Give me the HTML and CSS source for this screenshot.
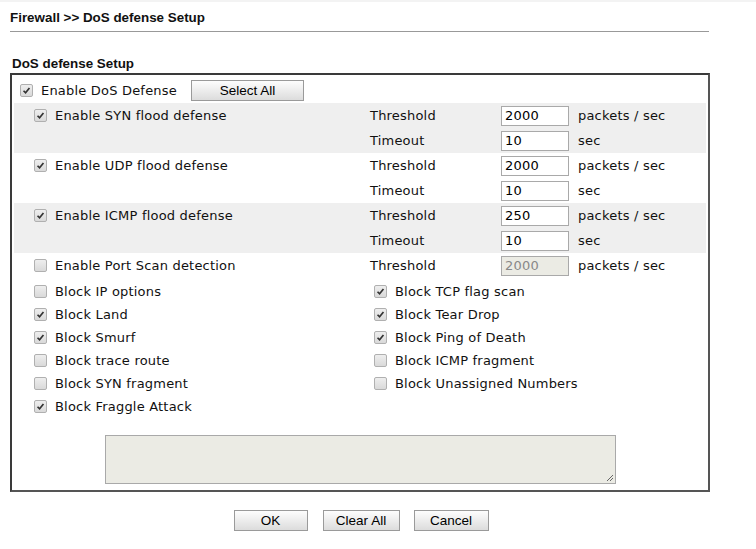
FILE: index.html
```html
<!DOCTYPE html>
<html>
<head>
<meta charset="utf-8">
<link rel="stylesheet" href="styles.css">
</head>
<body>
<div class="topband"></div>
<div class="page">
  <div class="crumb">Firewall &gt;&gt; DoS defense Setup</div>
  <div class="sectitle">DoS defense Setup</div>
  <div class="box">
    <div class="row-main">
      <span class="cb on"><svg viewBox="0 0 13 13"><path d="M3 6.8 L5.4 9.2 L10 3.6" /></svg></span>
      <span class="lbl">Enable DoS Defense</span>
      <button class="btn selall">Select All</button>
    </div>

    <div class="group gray">
      <div class="sub">
        <div class="c1"><span class="cb on"><svg viewBox="0 0 13 13"><path d="M3 6.8 L5.4 9.2 L10 3.6" /></svg></span><span class="lbl">Enable SYN flood defense</span></div>
        <div class="c2">Threshold</div>
        <div class="c3"><span class="inp">2000</span></div>
        <div class="c4">packets / sec</div>
      </div>
      <div class="sub">
        <div class="c1"></div>
        <div class="c2">Timeout</div>
        <div class="c3"><span class="inp">10</span></div>
        <div class="c4">sec</div>
      </div>
    </div>

    <div class="group">
      <div class="sub">
        <div class="c1"><span class="cb on"><svg viewBox="0 0 13 13"><path d="M3 6.8 L5.4 9.2 L10 3.6" /></svg></span><span class="lbl">Enable UDP flood defense</span></div>
        <div class="c2">Threshold</div>
        <div class="c3"><span class="inp">2000</span></div>
        <div class="c4">packets / sec</div>
      </div>
      <div class="sub">
        <div class="c1"></div>
        <div class="c2">Timeout</div>
        <div class="c3"><span class="inp">10</span></div>
        <div class="c4">sec</div>
      </div>
    </div>

    <div class="group gray">
      <div class="sub">
        <div class="c1"><span class="cb on"><svg viewBox="0 0 13 13"><path d="M3 6.8 L5.4 9.2 L10 3.6" /></svg></span><span class="lbl">Enable ICMP flood defense</span></div>
        <div class="c2">Threshold</div>
        <div class="c3"><span class="inp">250</span></div>
        <div class="c4">packets / sec</div>
      </div>
      <div class="sub">
        <div class="c1"></div>
        <div class="c2">Timeout</div>
        <div class="c3"><span class="inp">10</span></div>
        <div class="c4">sec</div>
      </div>
    </div>

    <div class="group single">
      <div class="sub">
        <div class="c1"><span class="cb"></span><span class="lbl">Enable Port Scan detection</span></div>
        <div class="c2">Threshold</div>
        <div class="c3"><span class="inp dis">2000</span></div>
        <div class="c4">packets / sec</div>
      </div>
    </div>

    <div class="blocks">
      <div class="bl"><span class="cb"></span><span class="lbl">Block IP options</span></div>
      <div class="br"><span class="cb on"><svg viewBox="0 0 13 13"><path d="M3 6.8 L5.4 9.2 L10 3.6" /></svg></span><span class="lbl">Block TCP flag scan</span></div>
      <div class="bl"><span class="cb on"><svg viewBox="0 0 13 13"><path d="M3 6.8 L5.4 9.2 L10 3.6" /></svg></span><span class="lbl">Block Land</span></div>
      <div class="br"><span class="cb on"><svg viewBox="0 0 13 13"><path d="M3 6.8 L5.4 9.2 L10 3.6" /></svg></span><span class="lbl">Block Tear Drop</span></div>
      <div class="bl"><span class="cb on"><svg viewBox="0 0 13 13"><path d="M3 6.8 L5.4 9.2 L10 3.6" /></svg></span><span class="lbl">Block Smurf</span></div>
      <div class="br"><span class="cb on"><svg viewBox="0 0 13 13"><path d="M3 6.8 L5.4 9.2 L10 3.6" /></svg></span><span class="lbl">Block Ping of Death</span></div>
      <div class="bl"><span class="cb"></span><span class="lbl">Block trace route</span></div>
      <div class="br"><span class="cb"></span><span class="lbl">Block ICMP fragment</span></div>
      <div class="bl"><span class="cb"></span><span class="lbl">Block SYN fragment</span></div>
      <div class="br"><span class="cb"></span><span class="lbl">Block Unassigned Numbers</span></div>
      <div class="bl"><span class="cb on"><svg viewBox="0 0 13 13"><path d="M3 6.8 L5.4 9.2 L10 3.6" /></svg></span><span class="lbl">Block Fraggle Attack</span></div>
      <div class="br"></div>
    </div>

    <div class="tawrap">
      <div class="ta"><svg class="grip" viewBox="0 0 10 10"><path d="M9 3 L3 9 M9 6 L6 9" /></svg></div>
    </div>
  </div>

  <div class="actions">
    <button class="btn act-ok">OK</button>
    <button class="btn act-clear">Clear All</button>
    <button class="btn act-cancel">Cancel</button>
  </div>
</div>
</body>
</html>
```

FILE: styles.css
```css
* { box-sizing: border-box; }
html, body { margin: 0; padding: 0; background: #fff; }
body {
  font-family: "DejaVu Sans", Verdana, sans-serif;
  font-size: 13px;
  letter-spacing: 0.2px;
  color: #111;
}
.topband { height: 2px; background: #f3f3f3; }
.page { padding: 0 0 0 10px; width: 720px; }
.crumb {
  font-family: "Liberation Sans", Arial, sans-serif;
  font-weight: bold;
  font-size: 13.4px;
  letter-spacing: 0;
  height: 30px;
  padding-top: 8px;
  width: 699px;
  border-bottom: 1px solid #999;
}
.sectitle {
  font-family: "Liberation Sans", Arial, sans-serif;
  font-weight: bold;
  font-size: 13.4px;
  letter-spacing: 0;
  margin-top: 24px;
  padding-left: 2px;
  height: 17px;
  line-height: 15px;
}
.box {
  width: 700px;
  border: 2px solid #3a3a3a;
  border-right-color: #555;
  border-bottom-color: #555;
  padding: 0 2px 2px 2px;
}
.cb {
  display: inline-block;
  width: 13px;
  height: 13px;
  border: 1px solid #b0b0b0;
  border-radius: 2px;
  background: linear-gradient(#eeeeee, #d9d9d9);
  vertical-align: middle;
  flex: none;
}
.cb svg { display: block; width: 11px; height: 11px; }
.cb svg path { fill: none; stroke: #333; stroke-width: 2; }
.lbl { white-space: nowrap; }

.row-main {
  height: 28px;
  display: flex;
  align-items: center;
  padding-left: 6px;
  padding-top: 2px;
}
.row-main .lbl { margin-left: 8px; }
.btn {
  font-family: "Liberation Sans", Arial, sans-serif;
  font-size: 13.5px;
  letter-spacing: 0;
  color: #000;
  height: 21px;
  padding: 0;
  border: 1px solid #9a9a9a;
  border-radius: 0;
  background: linear-gradient(#fdfdfd, #dcdcdc);
}
.selall { width: 113px; margin-left: 14px; }

.group.gray { background: #efefef; }
.sub {
  display: grid;
  grid-template-columns: 356px 131px 77px 1fr;
  height: 25px;
  align-items: center;
}
.c1 { display: flex; align-items: center; padding-left: 20px; }
.c1 .lbl { margin-left: 8px; }
.inp {
  display: block;
  width: 68px;
  height: 20px;
  border: 1px solid #a9a9a9;
  background: #fff;
  padding: 0 0 0 3px;
  line-height: 18px;
  color: #000;
}
.inp.dis { background: #ebebe4; color: #888; }

.blocks {
  display: grid;
  grid-template-columns: 360px 1fr;
  grid-auto-rows: 23px;
  padding-top: 2px;
}
.bl, .br { display: flex; align-items: center; }
.bl { padding-left: 20px; }
.br { padding-left: 0; }
.bl .lbl, .br .lbl { margin-left: 8px; }

.tawrap { padding: 17px 0 4px 91px; }
.ta {
  position: relative;
  width: 511px;
  height: 49px;
  border: 1px solid #a9a9a9;
  background: #ebebe4;
}
.grip { position: absolute; right: 1px; bottom: 1px; width: 10px; height: 10px; }
.grip path { stroke: #666; stroke-width: 1; fill: none; }

.actions {
  width: 700px;
  display: flex;
  justify-content: center;
  gap: 14px;
  padding-top: 18px;
  padding-left: 2px;
}
.act-ok { width: 74px; margin-right: 1px; }
.act-clear { width: 77px; }
.act-cancel { width: 75px; }
```
